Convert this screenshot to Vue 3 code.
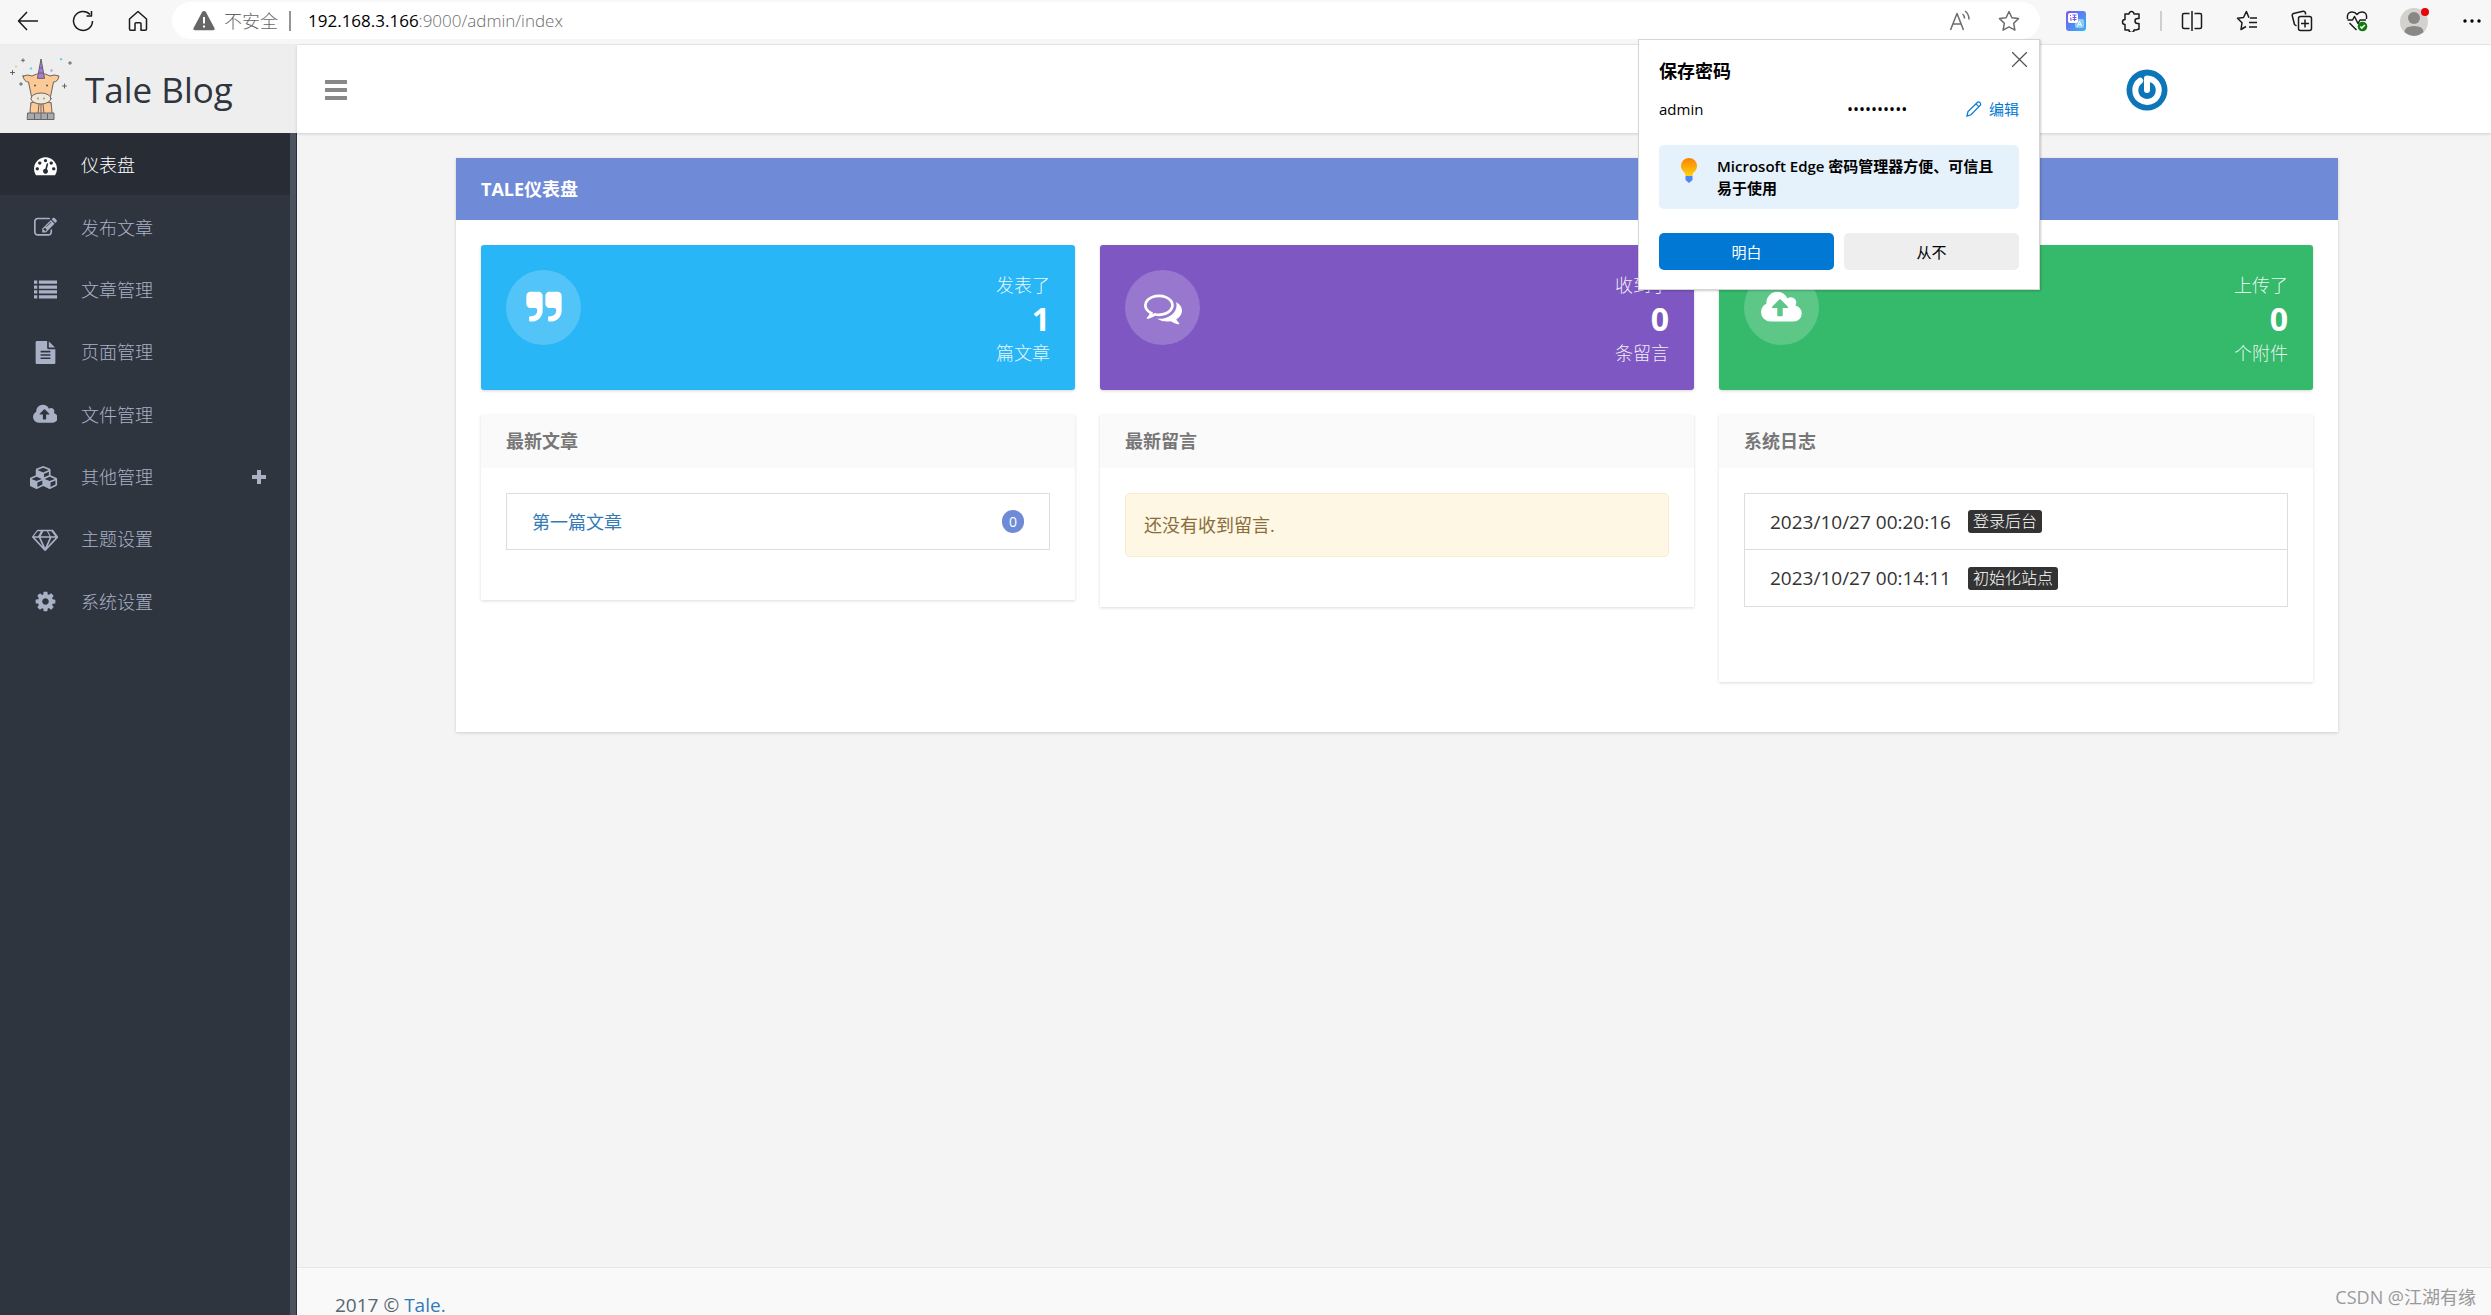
<script setup>
const menu = [
  { label: '仪表盘', active: true, box: '0 0 1792 1792', path: 'M384 1152q0-53-37.5-90.5t-90.5-37.5-90.5 37.5-37.5 90.5 37.5 90.5 90.5 37.5 90.5-37.5 37.5-90.5zm192-448q0-53-37.5-90.5t-90.5-37.5-90.5 37.5-37.5 90.5 37.5 90.5 90.5 37.5 90.5-37.5 37.5-90.5zm428 481l101-382q6-26-7.5-48.5t-38.5-29.5-48 6.5-30 39.5l-101 382q-60 5-107 43.5t-63 98.5q-20 77 20 146t117 89 146-20 89-117q16-60-6-117t-72-91zm660-33q0-53-37.5-90.5t-90.5-37.5-90.5 37.5-37.5 90.5 37.5 90.5 90.5 37.5 90.5-37.5 37.5-90.5zm-640-640q0-53-37.5-90.5t-90.5-37.5-90.5 37.5-37.5 90.5 37.5 90.5 90.5 37.5 90.5-37.5 37.5-90.5zm448 192q0-53-37.5-90.5t-90.5-37.5-90.5 37.5-37.5 90.5 37.5 90.5 90.5 37.5 90.5-37.5 37.5-90.5zm320 448q0 261-141 483-19 29-54 29h-1402q-35 0-54-29-141-221-141-483 0-182 71-348t191-286 286-191 348-71 348 71 286 191 191 286 71 348z' },
  { label: '发布文章', box: '0 0 1792 1792', path: 'M888 1184l116-116-152-152-116 116v56h96v96h56zm440-720q-16-16-33 1l-350 350q-17 17-1 33t33-1l350-350q17-17 1-33zm80 594v190q0 119-84.5 203.5t-203.5 84.5h-832q-119 0-203.5-84.5t-84.5-203.5v-832q0-119 84.5-203.5t203.5-84.5h832q63 0 117 25 15 7 18 23 3 17-9 29l-49 49q-14 14-32 8-23-6-45-6h-832q-66 0-113 47t-47 113v832q0 66 47 113t113 47h832q66 0 113-47t47-113v-126q0-13 9-22l64-64q15-15 35-7t20 29zm-96-738l288 288-672 672h-288v-288zm444 132l-92 92-288-288 92-92q28-28 68-28t68 28l152 152q28 28 28 68t-28 68z' },
  { label: '文章管理', box: '0 0 1792 1792', path: 'M0 192h256v256H0zM0 576h256v256H0zM0 960h256v256H0zM0 1344h256v256H0zM384 192h1408v256H384zM384 576h1408v256H384zM384 960h1408v256H384zM384 1344h1408v256H384z' },
  { label: '页面管理', box: '0 0 1792 1792', path: 'M1596 476q14 14 28 36h-472v-472q22 14 36 28zM1120 640h544v1056q0 40-28 68t-68 28H224q-40 0-68-28t-28-68V96q0-40 28-68t68-28h800v544q0 40 28 68t68 28zm160 736v-64q0-14-9-23t-23-9H544q-14 0-23 9t-9 23v64q0 14 9 23t23 9h704q14 0 23-9t9-23zm0-256v-64q0-14-9-23t-23-9H544q-14 0-23 9t-9 23v64q0 14 9 23t23 9h704q14 0 23-9t9-23zm0-256v-64q0-14-9-23t-23-9H544q-14 0-23 9t-9 23v64q0 14 9 23t23 9h704q14 0 23-9t9-23z' },
  { label: '文件管理', box: '0 0 1920 1792', path: 'M1280 864q0-14-9-23l-352-352q-9-9-23-9t-23 9l-351 351q-10 12-10 24 0 14 9 23t23 9h224v352q0 13 9.5 22.5t22.5 9.5h192q13 0 22.5-9.5t9.5-22.5v-352h224q13 0 22.5-9.5t9.5-22.5zm640 288q0 159-112.5 271.5t-271.5 112.5h-1088q-185 0-316.5-131.5t-131.5-316.5q0-130 70-240t188-165q-2-30-2-43 0-212 150-362t362-150q156 0 285.5 87t188.5 231q71-62 166-62 106 0 181 75t75 181q0 76-41 138 130 31 213.5 135.5t83.5 238.5z' },
  { label: '其他管理', more: true, box: '0 0 2304 1792', path: 'M576 1632l384-192v-314l-384 164v342zm-64-454l404-173-404-173-404 173zm1088 454l384-192v-314l-384 164v342zm-64-454l404-173-404-173-404 173zm-448-293l384-165v-266l-384 164v267zm-64-379l441-189-441-189-441 189zm1088 518v416q0 36-19 67t-52 47l-448 224q-25 14-57 14t-57-14l-448-224q-4-2-7-4-2 2-7 4l-448 224q-25 14-57 14t-57-14l-448-224q-33-16-52-47t-19-67v-416q0-38 21.5-70t56.5-48l434-186v-400q0-38 21.5-70t56.5-48l448-192q23-10 50-10t50 10l448 192q35 16 56.5 48t21.5 70v400l434 186q36 16 57 48t21 70z' },
  { label: '主题设置', box: '0 0 2048 1792', path: 'M212 768l623 665-300-665h-323zm812 772l349-772h-698zm-538-900l204-384h-262l-288 384h346zm727 793l623-665h-323zm-531-793h684l-204-384h-276zm776 0h346l-288-384h-262zm193-486l384 512q14 18 13 41.5t-17 40.5l-960 1024q-18 20-47 20t-47-20l-960-1024q-16-17-17-40.5t13-41.5l384-512q18-26 51-26h1152q33 0 51 26z' },
  { label: '系统设置', box: '0 0 1792 1792', path: 'M1152 896q0-106-75-181t-181-75-181 75-75 181 75 181 181 75 181-75 75-181zm512-109v222q0 12-8 23t-20 13l-185 28q-19 54-39 91 35 50 107 138 10 12 10 25t-9 23q-27 37-99 108t-94 71q-12 0-26-9l-138-108q-44 23-91 38-16 136-29 186-7 28-36 28h-222q-14 0-24.5-8.5t-11.5-21.5l-28-184q-49-16-90-37l-141 107q-10 9-25 9-14 0-25-11-126-114-165-168-7-10-7-23 0-12 8-23 15-21 51-66.5t54-70.5q-27-50-41-99l-183-27q-13-2-21-12.5t-8-23.5v-222q0-12 8-23t19-13l186-28q14-46 39-92-40-57-107-138-10-12-10-24 0-10 9-23 26-36 98.5-107.5t94.5-71.5q13 0 26 10l138 107q44-23 91-38 16-136 29-186 7-28 36-28h222q14 0 24.5 8.5t11.5 21.5l28 184q49 16 90 37l142-107q9-9 24-9 13 0 25 10 129 119 165 170 7 8 7 22 0 12-8 23-15 21-51 66.5t-54 70.5q26 50 41 98l183 28q13 2 21 12.5t8 23.5z' }
]

const stats = [
  { tone: 'blue', before: '发表了', count: 1, after: '篇文章', box: '0 0 1792 1792', path: 'M832 320v704q0 104-40.5 198.5t-109.5 163.5-163.5 109.5-198.5 40.5h-64q-26 0-45-19t-19-45v-128q0-26 19-45t45-19h64q106 0 181-75t75-181v-32q0-40-28-68t-68-28h-224q-80 0-136-56t-56-136v-384q0-80 56-136t136-56h384q80 0 136 56t56 136zm896 0v704q0 104-40.5 198.5t-109.5 163.5-163.5 109.5-198.5 40.5h-64q-26 0-45-19t-19-45v-128q0-26 19-45t45-19h64q106 0 181-75t75-181v-32q0-40-28-68t-68-28h-224q-80 0-136-56t-56-136v-384q0-80 56-136t136-56h384q80 0 136 56t56 136z' },
  { tone: 'purple', before: '收到了', count: 0, after: '条留言', box: '0 0 1792 1792', path: 'M704 384q-153 0-286 52t-211.5 141-78.5 191q0 82 53 158t149 132l97 56-35 84q34-20 62-39l44-31 53 10q78 14 153 14 153 0 286-52t211.5-141 78.5-191-78.5-191-211.5-141-286-52zm0-128q191 0 353.5 68.5t256.5 186.5 94 257-94 257-256.5 186.5-353.5 68.5q-86 0-176-16-124 88-278 128-36 9-86 16h-3q-11 0-20.5-8t-11.5-21q-1-3-1-6.5t.5-6.5 2-6l2.5-5 3.5-5.5 4-5 4.5-5 4-4.5q5-6 23-25t26-29.5 22.5-29 25-38.5 20.5-44q-124-72-195-177t-71-224q0-139 94-257t256.5-186.5 353.5-68.5zm822 1169q10 24 20.5 44t25 38.5 22.5 29 26 29.5 23 25q1 1 4 4.5t4.5 5 4 5 3.5 5.5l2.5 5 2 6 .5 6.5-1 6.5q-3 14-13 22t-22 7q-50-7-86-16-154-40-278-128-90 16-176 16-271 0-472-132 58 4 88 4 161 0 309-45t264-129q125-92 192-212t67-254q0-77-23-152 129 71 204 178t75 230q0 120-71 224.5t-195 176.5z' },
  { tone: 'green', before: '上传了', count: 0, after: '个附件', box: '0 0 1920 1792', path: menu[4].path }
]

const logs = [
  { time: '2023/10/27 00:20:16', action: '登录后台' },
  { time: '2023/10/27 00:14:11', action: '初始化站点' }
]
</script>

<template>
  <div class="window">
    <header class="browser">
      <button class="tool" aria-label="返回"><svg width="22" height="22" viewBox="0 0 22 22" class="line"><path d="M21 11H1.500M10 2L1.500 11L10 20" /></svg></button>
      <button class="tool" aria-label="刷新"><svg width="22" height="22" viewBox="0 0 22 22" class="line"><path d="M20.500 11A9.500 9.500 0 1 1 18 4.500M19.500 1v5h-5" /></svg></button>
      <button class="tool" aria-label="主页"><svg width="22" height="22" viewBox="0 0 22 22" class="line"><path d="M2.500 9L11 1.500L19.500 9v10q0 1.200-1.200 1.200H14v-6.400q0-1-1-1H9q-1 0-1 1v6.400H3.700q-1.200 0-1.200-1.200z" /></svg></button>
      <div class="address">
        <svg width="22" height="22" viewBox="0 0 22 22"><path d="M11 1q1.300 0 2 1.200l8.300 15.500q1.200 2.500-1.600 2.500H2.300q-2.800 0-1.600-2.500L9 2.200Q9.700 1 11 1z" fill="#666" /><path d="M11 7v6.500M11 15.500v2" stroke="#fff" stroke-width="2" /></svg>
        <span class="insecure">不安全</span>
        <span class="url"><b>192.168.3.166</b>:9000/admin/index</span>
        <button class="mini" aria-label="朗读"><svg width="22" height="22" viewBox="0 0 22 22" class="line grey"><path d="M1.500 20L8 3.500L14.500 20M4 14h8.300M13.500 4q2 1.500 2 4.500M16 1q4 3 4 8.500" /></svg></button>
        <button class="mini" aria-label="收藏"><svg width="22" height="22" viewBox="0 0 22 22" class="line grey"><path d="M11 1.500l2.900 6.200 6.600.9-4.800 4.700 1.200 6.800L11 16.900l-5.900 3.200 1.200-6.800L1.500 8.600l6.600-.9z" /></svg></button>
      </div>
      <button class="tool" aria-label="翻译">
        <svg width="22" height="22" viewBox="0 0 22 22">
          <defs><linearGradient id="tr" x1="0" y1="0" x2="1" y2="1"><stop offset="0" stop-color="#7a55ee" /><stop offset="1" stop-color="#35b5f5" /></linearGradient></defs>
          <rect x="1" y="1" width="20" height="20" rx="3" fill="url(#tr)" /><rect x="10" y="9" width="9" height="9" rx="2" fill="#8dccf8" /><rect x="3" y="3" width="10" height="10" rx="2" fill="#fff" /><path d="M5 5.500h1M5 8h1v3M7.500 5h4M7.500 7.500h4M9.500 5v6M7.500 9.500h4" stroke="#7a55ee" fill="none" /><path d="M12.500 16.500l2-5.500 2 5.500M13.300 14.700h2.500" stroke="#fff" fill="none" />
        </svg>
      </button>
      <button class="tool" aria-label="扩展"><svg width="22" height="22" viewBox="0 0 22 22" class="line"><path d="M5 4h4a2.500 2.500 0 1 1 5 0h5v4.500h-1.500a2.500 2.500 0 0 0 0 5H19V19q-2 1-5 1a2.500 2.500 0 0 1-5 0H5v-5.500a2.500 2.500 0 1 1 0-5z" /></svg></button>
      <i class="rule"></i>
      <button class="tool" aria-label="分屏"><svg width="22" height="22" viewBox="0 0 22 22" class="line"><path d="M11 1v20M8.500 3.500H3q-1.500 0-1.500 1.500v12q0 1.500 1.500 1.500h5.500M13.500 3.500H19q1.500 0 1.500 1.500v12q0 1.500-1.500 1.500h-5.500" /></svg></button>
      <button class="tool" aria-label="收藏夹"><svg width="22" height="22" viewBox="0 0 22 22" class="line"><path d="M13 7.700L10.400 1.500L7.500 7.500L1.500 8.300L6 12.800L5 19.500L10 16.500M14 8h7M13 12.500h8M13 17h8" /></svg></button>
      <button class="tool" aria-label="集锦"><svg width="22" height="22" viewBox="0 0 22 22" class="line"><path d="M5.500 16L3.500 14.500L1.200 5.500Q1 4 2.500 3.500L12 1.200Q14 1 14.500 3v1.500" /><rect x="7.500" y="6.500" width="13" height="14" rx="2" /><path d="M14 9.500v8M10 13.500h8" /></svg></button>
      <button class="tool" aria-label="健康"><svg width="22" height="22" viewBox="0 0 22 22" class="line"><path d="M1.500 9Q.5 2.500 5.500 2Q9 1.700 11 4.500Q13 1.700 16.500 2Q21.500 2.500 20.500 9M1.500 10h5l2-3.500 3.500 7 2-3.500h6M3.500 13l7 7" /><circle cx="16.500" cy="16.500" r="4.800" fill="#107c10" stroke="none" /><path d="M14.300 16.500l1.600 1.600 2.900-3" stroke="#fff" /></svg></button>
      <button class="tool profile" aria-label="个人资料"><svg width="34" height="34" viewBox="0 0 34 34"><circle cx="17" cy="18" r="14" fill="#d4d2cf" /><circle cx="17" cy="14" r="6" fill="#8a8886" /><path d="M7.500 28.300Q7.500 22 17 22T26.500 28.300Q17 35.500 7.500 28.300z" fill="#8a8886" /><circle cx="28" cy="8" r="4" fill="#e3060b" /></svg></button>
      <button class="tool more" aria-label="更多"><svg width="18" height="4" viewBox="0 0 18 4"><circle cx="2" cy="2" r="1.700" /><circle cx="9" cy="2" r="1.700" /><circle cx="16" cy="2" r="1.700" /></svg></button>
    </header>

    <div class="page">
      <aside class="side">
        <a class="logo" href="#">
          <svg width="62" height="62" viewBox="0 0 62 62" stroke-linejoin="round" stroke-linecap="round">
            <g stroke="#6b6262" stroke-width="1">
              <path d="M21 45L23 56H39L41 45Z" fill="#fcca94" />
              <path d="M21 45Q20 51 20 56H28L29 46M41 45Q42 51 42 56H34L33 46M31 46V56" fill="#fcca94" />
              <path d="M18 55H44V61.500H17.500ZM24.500 56V61M31 56V61M37.500 56V61" fill="#a5a9b2" />
              <path d="M13 18Q18 16 22 18Q31 13 40 18Q44 16 49 18Q48 24 43.500 24L40 41H22L18.500 24Q14 24 13 18Z" fill="#fcca94" />
              <ellipse cx="31" cy="40.500" rx="10" ry="5.500" fill="#efe9db" />
              <path d="M27.500 20L31 1L34.500 20Z" fill="#a57be0" /><path d="M28.500 15H33.500M29.500 10H32.500" fill="none" />
              <path d="M28 40v1M34 40v1" />
            </g>
            <g fill="#555"><circle cx="25" cy="27.500" r="1" /><circle cx="37" cy="27.500" r="1" /></g>
            <path d="M2.500 12.500v4M.5 14.500h4M13 .8v3M11.500 2.300h3M60 3.500v3M58.500 5h3M11 24.500v3M9.500 26h3M54.500 26v4M52.500 28h4" stroke="#566" stroke-width="1" fill="none" />
            <circle cx="51" cy="1.300" r="1.200" fill="#5fd9e8" /><circle cx="21" cy="10.500" r="1.200" fill="#5fd9e8" /><circle cx="6" cy="8.500" r="1.200" fill="#fcca94" /><circle cx="41.500" cy="12.500" r="1.200" fill="#c39be8" />
          </svg>
          <span>Tale Blog</span>
        </a>
        <nav class="menu">
          <a v-for="m in menu" :key="m.label" href="#" :class="{ active: m.active }">
            <span class="glyph"><svg :viewBox="m.box" height="23" fill="currentColor"><path :d="m.path" /></svg></span>
            <span>{{ m.label }}</span>
            <svg v-if="m.more" class="plus" width="14" height="14" viewBox="0 0 14 14"><path d="M7 0v14M0 7h14" stroke="currentColor" stroke-width="4" /></svg>
          </a>
        </nav>
      </aside>

      <div class="main">
        <div class="topbar">
          <button class="burger" aria-label="菜单"><i></i><i></i><i></i></button>
          <a href="#" class="avatar" aria-label="用户"><svg width="42" height="42" viewBox="0 0 42 42"><circle cx="21" cy="21" r="20.500" fill="#0d76b8" /><path d="M21 21V9.500A11.700 11.700 0 1 1 14.200 11.700" fill="none" stroke="#fff" stroke-width="6" stroke-linecap="round" stroke-linejoin="round" /></svg></a>
        </div>

        <main class="panel">
          <h1>TALE仪表盘</h1>
          <div class="grid">
            <section v-for="s in stats" :key="s.tone" class="stat" :class="s.tone">
              <span class="round"><svg :viewBox="s.box" height="38" fill="#fff"><path :d="s.path" /></svg></span>
              <p><span>{{ s.before }}</span><strong>{{ s.count }}</strong><span>{{ s.after }}</span></p>
            </section>

            <section class="card">
              <h2>最新文章</h2>
              <ul><li><a href="#">第一篇文章</a><span class="badge">0</span></li></ul>
            </section>
            <section class="card">
              <h2>最新留言</h2>
              <div class="alert">还没有收到留言.</div>
            </section>
            <section class="card tall">
              <h2>系统日志</h2>
              <ul><li v-for="l in logs" :key="l.time"><time>{{ l.time }}</time><span class="chip">{{ l.action }}</span></li></ul>
            </section>
          </div>
        </main>

        <footer class="foot">2017 © <a href="#">Tale.</a></footer>
      </div>
    </div>

    <div class="popup" role="dialog" aria-label="保存密码">
      <button class="close" aria-label="关闭"><svg width="15" height="15" viewBox="0 0 15 15"><path d="M0 0L15 15M15 0L0 15" stroke="#555" stroke-width="1.300" /></svg></button>
      <h3>保存密码</h3>
      <div class="account">
        <span class="user">admin</span><span class="dots">••••••••••</span>
        <button class="edit"><svg width="16" height="16" viewBox="0 0 16 16"><path d="M1 15l1-4.500L11.500 1.200q1.200-.8 2.400.4t.5 2.500L5 13.700zM10 2.800l3 3" fill="none" stroke="#0078d4" stroke-width="1.200" /></svg>编辑</button>
      </div>
      <div class="tip">
        <svg width="16" height="26" viewBox="0 0 16 26">
          <defs><linearGradient id="bulb" x1="0" y1="0" x2="0" y2="1"><stop offset="0" stop-color="#fb8107" /><stop offset="1" stop-color="#fdd20a" /></linearGradient></defs>
          <path d="M8 0a8 8 0 0 1 8 8q0 4-4 7l-.5 3h-7L4 15Q0 12 0 8A8 8 0 0 1 8 0z" fill="url(#bulb)" /><path d="M4.500 18h7v4L8 25l-3.500-3z" fill="#4b87f5" />
        </svg>
        <p>Microsoft Edge 密码管理器方便、可信且易于使用</p>
      </div>
      <div class="actions"><button class="primary">明白</button><button>从不</button></div>
    </div>

    <div class="mark">CSDN @江湖有缘</div>
  </div>
</template>

<style>
body {
  margin: 0;
  overflow: hidden;
}
</style>

<style scoped>
* {
  box-sizing: border-box;
}
.window {
  position: relative;
  display: flex;
  flex-direction: column;
  height: 100vh;
  overflow: hidden;
  background: #f4f4f4;
  color: #333;
  font: 400 18px/26px "Open Sans", "Noto Sans CJK SC", sans-serif;
}
button {
  border: 0;
  padding: 0;
  background: none;
  color: inherit;
  font: inherit;
}
a {
  color: #337ab7;
  text-decoration: none;
}
svg {
  display: block;
  flex: none;
}
h1,
h2,
h3,
p,
ul {
  margin: 0;
  padding: 0;
}
li {
  list-style: none;
}
.line {
  fill: none;
  stroke: #1b1b1b;
  stroke-width: 1.5;
  stroke-linejoin: round;
}
.grey {
  stroke: #6c6c6c;
}

/* Browser toolbar */
.browser {
  display: flex;
  align-items: center;
  height: 45px;
  padding-bottom: 3px;
  border-bottom: 1px solid #ebebeb;
  background: #f7f7f7;
}
.tool {
  display: flex;
  flex: none;
  align-items: center;
  justify-content: center;
  width: 55px;
  height: 37px;
}
.profile {
  width: 60px;
}
.more {
  width: 47px;
  justify-content: flex-end;
  padding-right: 10px;
}
.rule {
  width: 2px;
  height: 20px;
  margin: 0 2px;
  background: #cfcfcf;
}
.address {
  display: flex;
  flex: 1;
  align-items: center;
  height: 37px;
  margin: 0 8px 0 7px;
  padding: 0 20px 0 21px;
  border-radius: 19px;
  background: #fff;
}
.insecure {
  margin-left: 9px;
  padding-right: 11px;
  border-right: 2px solid #949494;
  color: #666;
  font-weight: 300;
  line-height: 20px;
}
.url {
  flex: 1;
  margin-left: 17px;
  color: #6d6d6d;
  font-size: 17px;
  font-weight: 300;
}
.url b {
  color: #000;
  font-weight: 400;
}
.mini {
  margin-left: 27px;
}

/* Shell */
.page {
  display: flex;
  flex: 1;
  min-height: 0;
}
.side {
  flex: none;
  width: 297px;
  background: linear-gradient(to left, #293039 1px, #4b545e 1px, #4b545e 7px, #2f353f 7px);
}
.logo {
  display: flex;
  align-items: center;
  gap: 13px;
  height: 88px;
  padding-left: 10px;
  background: #eee;
  color: #2f353f;
  font-size: 35px;
  line-height: 44px;
}
.logo span {
  padding-top: 2px;
}
.menu {
  display: grid;
  grid-auto-rows: 1fr;
  height: 499px;
  margin-right: 7px;
}
.menu a {
  display: flex;
  align-items: center;
  padding: 2px 24px 0 25px;
  color: #a9b1c5;
  font-weight: 300;
}
.menu a.active {
  background: #282c34;
  color: #fff;
}
.glyph {
  display: flex;
  justify-content: center;
  width: 40px;
  margin-right: 16px;
}
.plus {
  margin-left: auto;
}
.main {
  display: flex;
  flex: 1;
  flex-direction: column;
  min-width: 0;
}
.topbar {
  display: flex;
  flex: none;
  align-items: center;
  justify-content: space-between;
  height: 88px;
  padding: 2px 323px 0 28px;
  background: #fff;
  box-shadow: 0 1px 3px rgba(0, 0, 0, 0.16);
}
.burger {
  display: grid;
  gap: 4px;
  width: 22px;
}
.burger i {
  height: 4px;
  background: #888;
}

/* Dashboard */
.panel {
  margin: 25px 153px 0 159px;
  background: #fff;
  box-shadow: 0 1px 3px rgba(0, 0, 0, 0.16);
}
.panel h1 {
  padding: 0 25px;
  background: #6f8bd7;
  color: #fff;
  font-size: 18px;
  font-weight: 700;
  line-height: 62px;
}
.grid {
  display: grid;
  grid-template-columns: repeat(3, 1fr);
  align-items: start;
  gap: 25px;
  padding: 25px 25px 50px;
}
.stat {
  display: flex;
  align-items: flex-start;
  justify-content: space-between;
  padding: 25px 25px 22px;
  border-radius: 3px;
  color: #fff;
  box-shadow: 0 1px 3px rgba(0, 0, 0, 0.16);
}
.blue {
  background: #29b6f6;
}
.purple {
  background: #7e57c2;
}
.green {
  background: #35b96b;
}
.round {
  display: flex;
  align-items: center;
  justify-content: center;
  width: 75px;
  height: 75px;
  border-radius: 50%;
  background: rgba(255, 255, 255, 0.2);
}
.stat p {
  display: grid;
  text-align: right;
}
.stat p span {
  color: rgba(255, 255, 255, 0.9);
  font-weight: 300;
  line-height: 30px;
}
.stat strong {
  font-size: 32px;
  font-weight: 700;
  line-height: 38px;
}
.card {
  padding-bottom: 50px;
  box-shadow: 0 1px 3px rgba(0, 0, 0, 0.14);
}
.tall {
  padding-bottom: 75px;
}
.card h2 {
  margin-bottom: 25px;
  padding: 0 25px;
  background: #fafafa;
  color: #777;
  font-size: 18px;
  font-weight: 700;
  line-height: 53px;
}
.card ul {
  margin: 0 25px;
  border: 1px solid #ddd;
}
.card li {
  display: flex;
  align-items: center;
  height: 55px;
  padding: 0 25px;
}
.card li + li {
  height: 57px;
  border-top: 1px solid #ddd;
}
.badge {
  width: 22px;
  height: 23px;
  margin-left: auto;
  border-radius: 12px;
  background: #6f8bd7;
  color: #fff;
  font-size: 14px;
  line-height: 23px;
  text-align: center;
}
.alert {
  margin: 0 25px;
  padding: 18px;
  border: 1px solid #faebcc;
  border-radius: 5px;
  background: #fdf7e4;
  color: #8a6d3b;
}
time {
  font-size: 19px;
}
.chip {
  margin-left: 17px;
  padding: 0 5px;
  border-radius: 3px;
  background: #333;
  color: #fff;
  font-size: 16px;
  font-weight: 300;
  line-height: 23px;
}
.foot {
  flex: none;
  height: 48px;
  margin-top: auto;
  padding: 28px 38px 0;
  border-top: 1px solid #e7e7e7;
  background: #f9f9f9;
  color: #58666e;
  font-size: 19px;
  line-height: 18px;
}

/* Password prompt */
.popup {
  position: absolute;
  top: 39px;
  right: 451px;
  width: 402px;
  height: 251px;
  padding: 18px 20px;
  border: 1px solid #d5d5d5;
  background: #fff;
  color: #000;
  box-shadow: 1px 1px 2px rgba(0, 0, 0, 0.2);
  font-size: 15px;
}
.close {
  position: absolute;
  top: 12px;
  right: 12px;
}
.popup h3 {
  font-size: 18px;
  font-weight: 700;
}
.account {
  display: flex;
  margin: 12px 0 23px;
}
.user {
  width: 188px;
}
.dots {
  font-size: 16px;
}
.edit {
  display: flex;
  align-items: center;
  gap: 7px;
  margin-left: auto;
  color: #0078d4;
}
.tip {
  display: flex;
  gap: 20px;
  height: 64px;
  margin-bottom: 24px;
  padding: 10px 16px 0 22px;
  border-radius: 5px;
  background: #e5f1fb;
}
.tip svg {
  margin-top: 3px;
}
.tip p {
  font-weight: 600;
  line-height: 22px;
}
.actions {
  display: flex;
  gap: 10px;
}
.actions button {
  flex: 1;
  height: 37px;
  border-radius: 5px;
  background: #eee;
}
.actions .primary {
  background: #0078d4;
  color: #fff;
}
.mark {
  position: absolute;
  right: 15px;
  bottom: 5px;
  color: #999;
}
</style>
